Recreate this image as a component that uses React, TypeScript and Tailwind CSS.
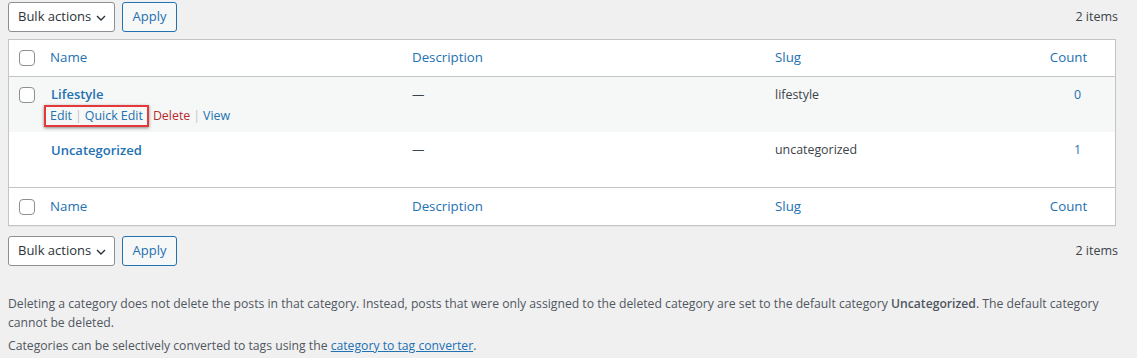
import React from "react";

const font = { fontFamily: '"Open Sans", "Noto Sans", sans-serif' };

function Checkbox() {
  return <span className="block w-4 h-4 rounded-[4px] border border-[#8c8f94] bg-white" />;
}

function BulkBar() {
  return (
    <div className="flex items-center justify-between pl-2 pr-[19px]">
      <div className="flex items-center gap-[7px]">
        <div className="flex items-center justify-between w-[107px] h-[30px] border border-[#8c8f94] rounded-[3px] bg-white pl-[9px] pr-[7px] text-[13px] text-[#2c3338] whitespace-nowrap">
          <span>Bulk actions</span>
          <svg width="12" height="12" viewBox="0 0 12 12" className="mt-[1px] shrink-0">
            <path d="M2 4 L6 8 L10 4" fill="none" stroke="#2c3338" strokeWidth="1.4" />
          </svg>
        </div>
        <div className="flex items-center justify-center w-[55px] h-[30px] border border-[#2271b1] rounded-[3px] bg-[#f6f7f7] text-[13px] text-[#2271b1]">
          Apply
        </div>
      </div>
      <span className="text-[12.5px] text-[#3c434a]">2 items</span>
    </div>
  );
}

function HeaderRow({ top }: { top: boolean }) {
  return (
    <div
      className={`flex items-center text-[13.3px] text-[#2271b1] ${
        top ? "h-[37px] border-b border-[#c3c4c7]" : "h-[38px] border-t border-[#c3c4c7] pt-[1px]"
      }`}
    >
      <div className="w-[41px] pl-[10px]">
        <Checkbox />
      </div>
      <div className="w-[362px]">Name</div>
      <div className="w-[363px]">Description</div>
      <div className="w-[265px]">Slug</div>
      <div className="flex-1 text-center pr-[18px]">Count</div>
    </div>
  );
}

export default function App() {
  return (
    <div className="w-[1137px] h-[358px] bg-[#f0f0f1] pt-[2px] text-[12.4px] overflow-hidden" style={font}>
      <BulkBar />
      <div className="mx-2 mt-[7px] w-[1108px] border border-[#c3c4c7] bg-white shadow-[0_1px_1px_rgba(0,0,0,0.04)]">
        <HeaderRow top />
        {/* Row 1 */}
        <div className="flex bg-[#f6f7f7] h-[55px] text-[12.4px] text-[#3c434a]">
          <div className="w-[41px] pl-[10px] pt-[10px]">
            <Checkbox />
          </div>
          <div className="w-[362px] pt-[7px]">
            <div className="font-semibold text-[13px] text-[#2271b1] leading-[20px] pl-[1px]">Lifestyle</div>
            <div className="flex items-center mt-[1px] leading-[16px]">
              <span className="relative -ml-[6px] flex items-center px-[4px] py-[1px] border-2 border-[#e5383b] shadow-[0_1px_3px_rgba(0,0,0,0.45)]">
                <span className="text-[#2271b1]">Edit</span>
                <span className="text-[#c3c4c7] mx-[3px]">|</span>
                <span className="text-[#2271b1]">Quick Edit</span>
              </span>
              <span className="ml-[4px] text-[#b32d2e]">Delete</span>
              <span className="text-[#c3c4c7] mx-[3px]">|</span>
              <span className="text-[#2271b1]">View</span>
            </div>
          </div>
          <div className="w-[363px] pt-[8px] leading-[20px]">—</div>
          <div className="w-[265px] pt-[8px] leading-[20px]">lifestyle</div>
          <div className="flex-1 pt-[8px] leading-[20px] text-center text-[#2271b1]">0</div>
        </div>
        {/* Row 2 */}
        <div className="flex bg-white h-[55px] text-[12.4px] text-[#3c434a]">
          <div className="w-[41px]" />
          <div className="w-[362px] pt-[8px]">
            <div className="font-semibold text-[13px] text-[#2271b1] leading-[20px] pl-[1px]">Uncategorized</div>
          </div>
          <div className="w-[363px] pt-[8px] leading-[20px]">—</div>
          <div className="w-[265px] pt-[8px] leading-[20px]">uncategorized</div>
          <div className="flex-1 pt-[8px] leading-[20px] text-center text-[#2271b1]">1</div>
        </div>
        <HeaderRow top={false} />
      </div>
      <div className="mt-[10px]">
        <BulkBar />
      </div>
      <div className="pl-2 pr-[14px] mt-[28px] text-[12.2px] text-[#50575e] leading-[19px]">
        <p>
          Deleting a category does not delete the posts in that category. Instead, posts that were only assigned to the
          deleted category are set to the default category <strong className="font-semibold">Uncategorized</strong>. The
          default category cannot be deleted.
        </p>
        <p className="mt-[4px]">
          Categories can be selectively converted to tags using the{" "}
          <span className="text-[#2271b1] underline">category to tag converter</span>.
        </p>
      </div>
    </div>
  );
}
